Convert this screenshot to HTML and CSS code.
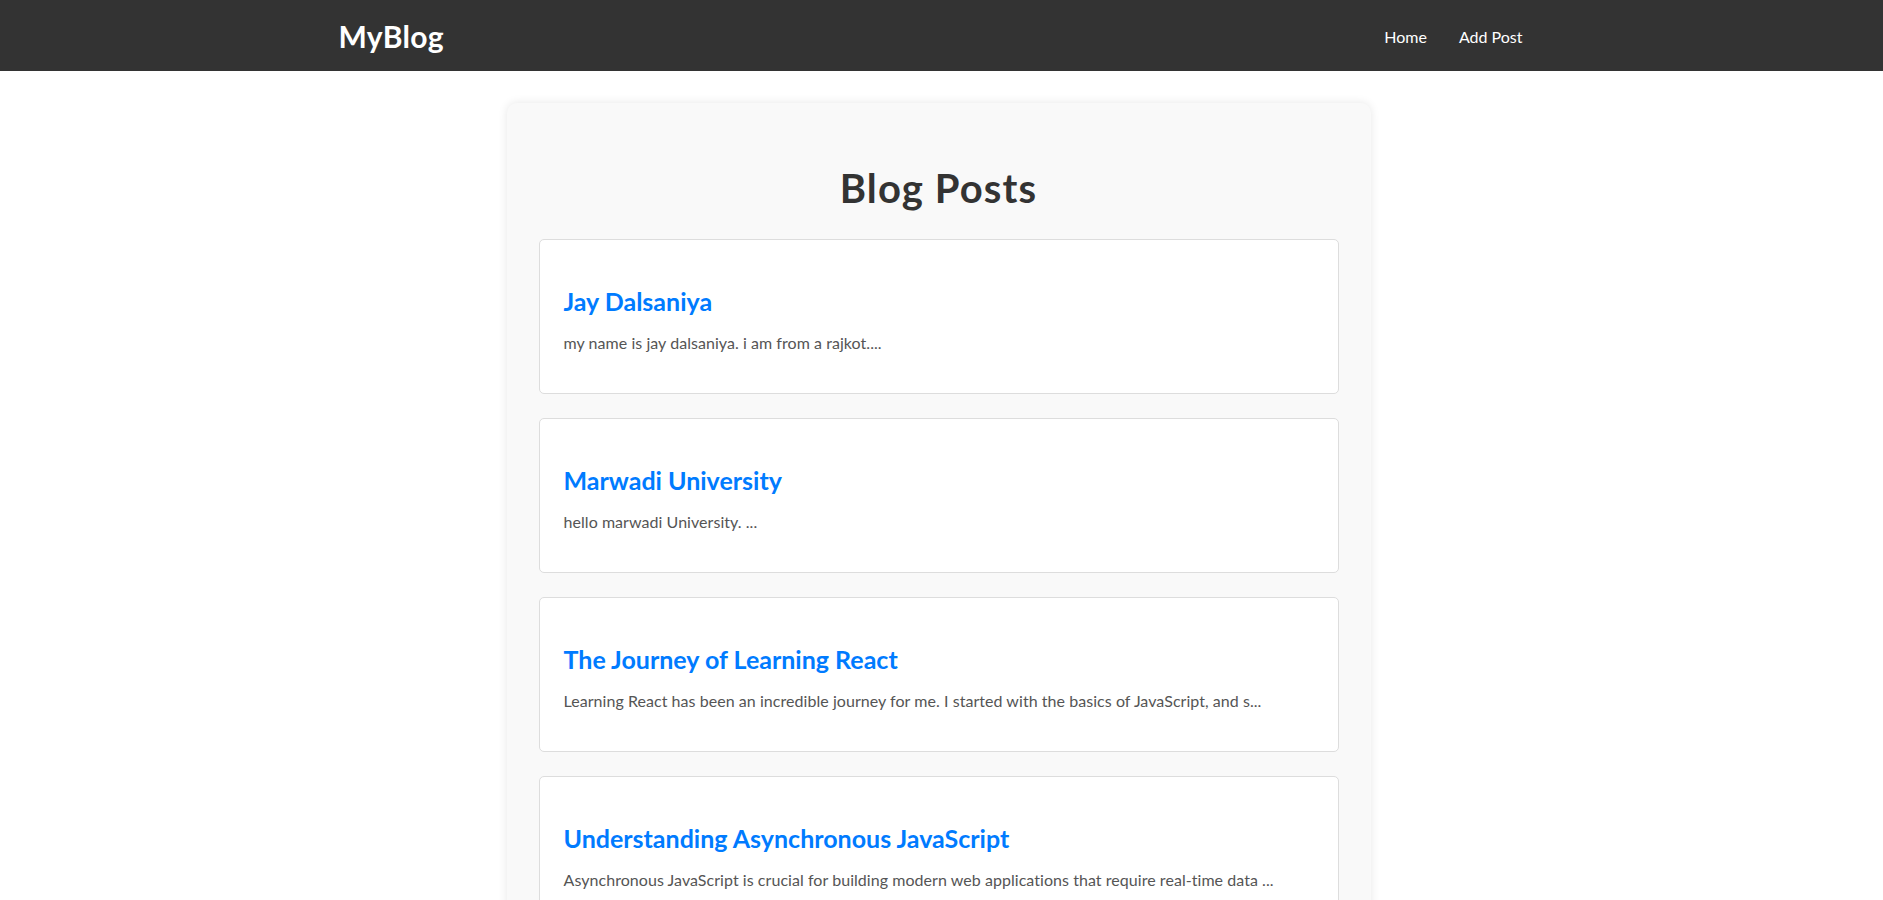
FILE: index.html
```html
<!DOCTYPE html>
<html lang="en">
<head>
<meta charset="utf-8">
<title>MyBlog</title>
<link rel="stylesheet" href="styles.css">
</head>
<body>
<header class="navbar">
  <div class="nav-inner">
    <a class="brand" href="#">MyBlog</a>
    <nav class="nav-links">
      <a href="#">Home</a>
      <a href="#">Add Post</a>
    </nav>
  </div>
</header>
<main class="container">
  <h1 class="page-title">Blog Posts</h1>
  <div class="post-list">
    <article class="post-card">
      <h2 class="post-title">Jay Dalsaniya</h2>
      <p class="post-excerpt">my name is jay dalsaniya. i am from a rajkot....</p>
    </article>
    <article class="post-card">
      <h2 class="post-title">Marwadi University</h2>
      <p class="post-excerpt">hello marwadi University. ...</p>
    </article>
    <article class="post-card">
      <h2 class="post-title">The Journey of Learning React</h2>
      <p class="post-excerpt">Learning React has been an incredible journey for me. I started with the basics of JavaScript, and s...</p>
    </article>
    <article class="post-card">
      <h2 class="post-title">Understanding Asynchronous JavaScript</h2>
      <p class="post-excerpt">Asynchronous JavaScript is crucial for building modern web applications that require real-time data ...</p>
    </article>
  </div>
</main>
</body>
</html>
```

FILE: styles.css
```css
* { box-sizing: border-box; }
body {
  margin: 0;
  background: #fff;
  font-family: Lato, "Open Sans", sans-serif;
  color: #333;
}
.navbar {
  background: #333;
  height: 71px;
}
.nav-inner {
  width: 1206px;
  margin: 0 auto;
  height: 100%;
  padding-right: 22px;
  display: flex;
  align-items: center;
  justify-content: space-between;
}
.brand {
  color: #fff;
  text-decoration: none;
  font-weight: 700;
  font-size: 30px;
  line-height: 36px;
  letter-spacing: 0.3px;
}
.nav-links {
  display: flex;
  gap: 32px;
  padding-top: 2px;
}
.nav-links a {
  color: #fff;
  text-decoration: none;
  font-size: 16px;
  line-height: 20px;
}
.container {
  width: 864px;
  margin: 32px 0 32px calc(50% - 435px);
  padding: 32px;
  background: #f9f9f9;
  border-radius: 10px;
  box-shadow: 0 0 10px rgba(0, 0, 0, 0.1);
}
.page-title {
  margin: 30px 0 27px;
  text-align: center;
  font-size: 40px;
  line-height: 47px;
  font-weight: 700;
  letter-spacing: 1.1px;
  color: #333;
}
.post-list {
  display: flex;
  flex-direction: column;
  gap: 24px;
}
.post-card {
  background: #fff;
  border: 1px solid #ddd;
  border-radius: 5px;
  padding: 24px 24px 25px;
}
.post-title {
  margin: 22px 0 15px;
  font-size: 25px;
  line-height: 30px;
  font-weight: 700;
  color: #007bff;
}
.post-excerpt {
  margin: 0 0 13px;
  font-size: 16px;
  line-height: 24px;
  letter-spacing: 0.05px;
  color: #555;
}
```
